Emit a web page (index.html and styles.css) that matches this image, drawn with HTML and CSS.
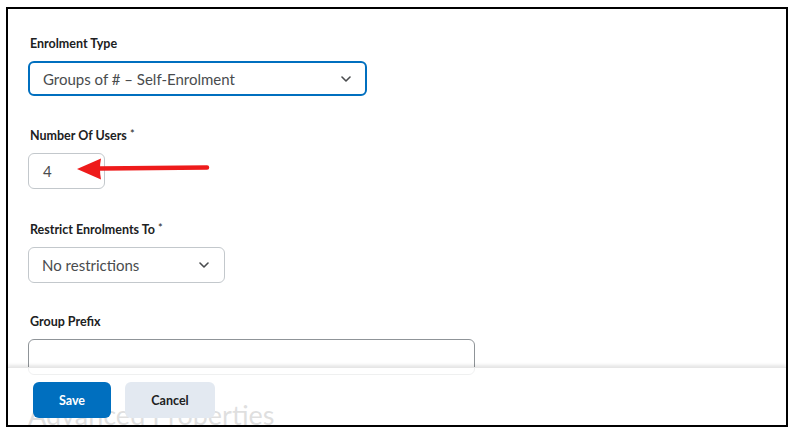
FILE: index.html
```html
<!DOCTYPE html>
<html lang="en">
<head>
<meta charset="utf-8">
<title>Group settings</title>
<link rel="stylesheet" href="styles.css">
</head>
<body>
<div class="frame">
  <div class="content">
    <div class="field field-first">
      <div class="label">Enrolment Type</div>
      <div class="select select-focus select-wide">
        <span>Groups of # – Self-Enrolment</span>
        <svg class="chev" width="10" height="6" viewBox="0 0 10 6"><path d="M1 1l4 4 4-4" fill="none" stroke="#494c4e" stroke-width="1.6" stroke-linecap="round" stroke-linejoin="round"/></svg>
      </div>
    </div>
    <div class="field">
      <div class="label">Number Of Users <span class="req">*</span></div>
      <div class="input input-num">4</div>
    </div>
    <div class="field">
      <div class="label">Restrict Enrolments To <span class="req">*</span></div>
      <div class="select select-narrow">
        <span>No restrictions</span>
        <svg class="chev" width="10" height="6" viewBox="0 0 10 6"><path d="M1 1l4 4 4-4" fill="none" stroke="#494c4e" stroke-width="1.6" stroke-linecap="round" stroke-linejoin="round"/></svg>
      </div>
    </div>
    <div class="field field-last">
      <div class="label">Group Prefix</div>
      <div class="input input-prefix"></div>
    </div>
    <h2 class="heading">Advanced Properties</h2>
  </div>
  <svg class="arrow" width="136" height="24" viewBox="0 0 136 24">
    <path d="M24 11.5 L131 10.5" stroke="#ee1b1b" stroke-width="4.5" stroke-linecap="round" fill="none"/>
    <path d="M1 12 L25 1.5 Q23 11.5 25 22.5 Z" fill="#ee1b1b"/>
  </svg>
  <div class="footer">
    <button class="btn btn-primary">Save</button>
    <button class="btn btn-secondary">Cancel</button>
  </div>
</div>
</body>
</html>
```
FILE: styles.css
```css
html, body {
  margin: 0;
  padding: 0;
  background: #fff;
}
body {
  font-family: Lato, "Open Sans", sans-serif;
  color: #202122;
}
.frame {
  position: relative;
  margin: 7px 0 0 6px;
  width: 782px;
  height: 420px;
  border: 2px solid #000;
  box-sizing: border-box;
  overflow: hidden;
  background: #fff;
}
.content {
  padding: 27px 0 0 20px;
}
.field {
  margin-bottom: 31px;
}
.field-first {
  margin-bottom: 30px;
}
.field-last {
  margin-bottom: 0;
}
.label {
  font-size: 12.5px;
  font-weight: 700;
  line-height: 16px;
  margin-bottom: 9px;
  padding-left: 2px;
  color: #202122;
}
.req {
  font-weight: 400;
  font-size: 11px;
  vertical-align: 2px;
}
.select, .input {
  box-sizing: border-box;
  border: 1px solid #c3c8cc;
  border-radius: 6px;
  height: 36px;
  display: flex;
  align-items: center;
  padding: 0 13px;
  font-size: 15px;
  color: #494c4e;
  background: #fff;
}
.select {
  justify-content: space-between;
}
.select-focus {
  border: 2px solid #006fbf;
  padding: 0 12px 0 13px;
  height: 35px;
}
.select-wide {
  width: 339px;
}
.select-narrow {
  width: 197px;
}
.chev {
  margin-right: 2px;
}
.input-num {
  width: 77px;
  padding-left: 14px;
}
.input-prefix {
  width: 447px;
  border-color: #8f9498;
}
.heading {
  margin: 24px 0 0 0;
  font-size: 27px;
  font-weight: 400;
  line-height: 32px;
  color: #202122;
}
.arrow {
  position: absolute;
  left: 68px;
  top: 148px;
}
.footer {
  position: absolute;
  left: 0;
  right: 0;
  bottom: 0;
  top: 358px;
  background: rgba(255, 255, 255, 0.86);
  border-top: 1px solid #e6e6e6;
  box-shadow: 0 -2px 3px rgba(0, 0, 0, 0.10);
  display: flex;
  align-items: flex-start;
  gap: 14px;
  padding: 14px 0 0 25px;
  box-sizing: border-box;
}
.btn {
  font-family: Lato, "Open Sans", sans-serif;
  font-size: 12.5px;
  font-weight: 700;
  height: 36px;
  border: none;
  border-radius: 6px;
  padding: 0;
}
.btn-primary {
  width: 78px;
  background: #006fbf;
  color: #fff;
}
.btn-secondary {
  width: 90px;
  background: #e3e9f1;
  color: #202122;
}
```
